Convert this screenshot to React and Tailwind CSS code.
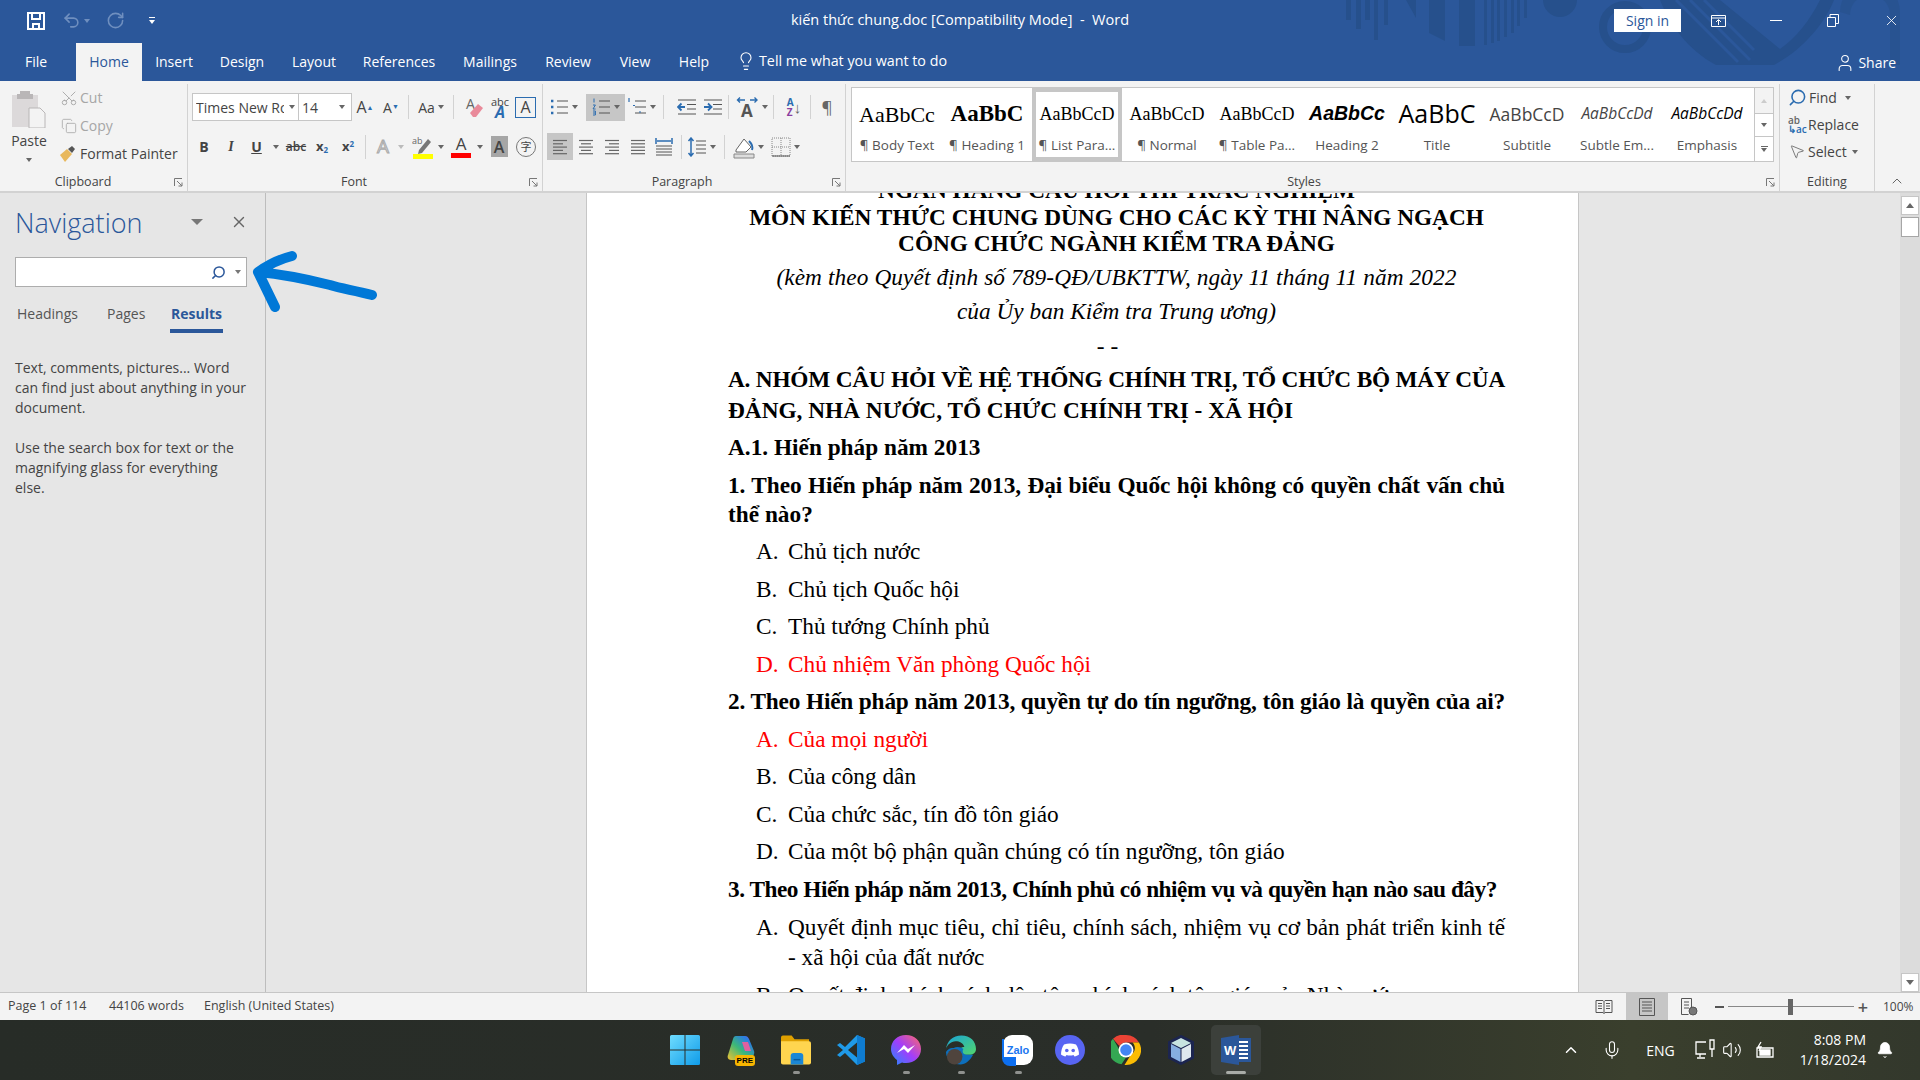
import { Search, X, Lightbulb, Scissors, Copy, Undo2, RotateCw, ChevronUp, Mic, Bell, Volume2, MousePointer2, User } from 'lucide-react';

const Caret = ({ className = 'ml-[3px]', color = 'border-t-[#666]' }) => (
  <span className={`inline-block h-0 w-0 border-x-[3px] border-t-[4px] border-x-transparent ${color} ${className}`} />
);

const Launcher = () => (
  <svg width="9" height="9" viewBox="0 0 9 9" fill="none" stroke="#777"><path d="M.5 8V.5H8M3 3l5 5M8 4.5V8H4.5" /></svg>
);

const Sep = ({ className = 'mx-[4px]' }) => <span className={`h-[24px] w-px bg-[#d2d2d2] ${className}`} />;

function Btn({ w, active, children, className = '' }) {
  return (
    <div className={`flex h-[27px] shrink-0 items-center justify-center ${w} ${active ? 'bg-[#c6c6c6]' : ''} ${className}`}>
      {children}
    </div>
  );
}

// lines used by the paragraph buttons
const Bars = ({ rows, color = '#666' }) => (
  <svg width="20" height="18" viewBox="0 0 20 18" stroke={color} strokeWidth="1.2">
    {rows.map(([a, b], i) => (
      <path key={i} d={`M${a} ${2.5 + i * 3.3}H${b}`} />
    ))}
  </svg>
);

const BulletList = ({ kind }) => (
  <svg width="20" height="20" viewBox="0 0 20 20" stroke="#555" strokeWidth="1.2">
    <path d="M8 4h11M8 10h11M8 16h11" />
    {kind === 'bullet' && <path d="M2 4h2.4M2 10h2.4M2 16h2.4" stroke="#2b6cb0" strokeWidth="2.4" />}
    {kind === 'number' && <path d="M3 1.5v4M2 8h2.4L2 12h2.6M2 14h2.4v4H2M2 16h2" stroke="#2b6cb0" strokeWidth="1" fill="none" />}
    {kind === 'multi' && <path d="M2 1v4M6 8.500h2M12 15h2" stroke="#2b6cb0" strokeWidth="1.200" />}
  </svg>
);

const Indent = ({ flip }) => (
  <svg width="20" height="20" viewBox="0 0 20 20" fill="none" stroke="#555" strokeWidth="1.200">
    <path d="M1 3h18M10 7.500h9M10 12h9M1 17h18" />
    <path d={flip ? 'M1 10h7M5 6.500l3.500 3.500L5 13.500' : 'M8 10H1M4.500 6.500L1 10l3.500 3.500'} stroke="#2b6cb0" strokeWidth="1.800" />
  </svg>
);

const sans = "font-['Open_Sans',sans-serif]";
const serif = "font-['Liberation_Serif',serif]";

const tabs = [
  ['Insert', 'w-[64px]'],
  ['Design', 'w-[72px]'],
  ['Layout', 'w-[72px]'],
  ['References', 'w-[98px]'],
  ['Mailings', 'w-[84px]'],
  ['Review', 'w-[72px]'],
  ['View', 'w-[62px]'],
  ['Help', 'w-[56px]'],
];

const styleItems = [
  ['AaBbCc', '¶ Body Text', "font-['Liberation_Serif',serif] text-[22px] text-black"],
  ['AaBbC', '¶ Heading 1', "font-['Liberation_Serif',serif] text-[23px] font-bold text-black"],
  ['AaBbCcD', '¶ List Para...', "font-['Liberation_Serif',serif] text-[18px] text-black"],
  ['AaBbCcD', '¶ Normal', "font-['Liberation_Serif',serif] text-[18px] text-black"],
  ['AaBbCcD', '¶ Table Pa...', "font-['Liberation_Serif',serif] text-[18px] text-black"],
  ['AaBbCc', 'Heading 2', "font-['Liberation_Sans',sans-serif] text-[19.500px] font-bold italic text-black"],
  ['AaBbC', 'Title', "font-['Open_Sans',sans-serif] text-[25px] text-black"],
  ['AaBbCcD', 'Subtitle', "font-['Open_Sans',sans-serif] text-[17.500px] text-[#444]"],
  ['AaBbCcDd', 'Subtle Em...', "font-['Open_Sans',sans-serif] text-[15.500px] italic text-[#444]"],
  ['AaBbCcDd', 'Emphasis', "font-['Open_Sans',sans-serif] text-[15.500px] italic text-black"],
];

const lines = [
  { t: 'NGÂN HÀNG CÂU HỎI THI TRẮC NGHIỆM', k: 'center font-bold', mt: '-mt-[16px]' },
  { t: 'MÔN KIẾN THỨC CHUNG DÙNG CHO CÁC KỲ THI NÂNG NGẠCH', k: 'center font-bold', mt: 'mt-px' },
  { t: 'CÔNG CHỨC NGÀNH KIỂM TRA ĐẢNG', k: 'center font-bold', mt: 'mt-0' },
  { t: '(kèm theo Quyết định số 789-QĐ/UBKTTW, ngày 11 tháng 11 năm 2022', k: 'center italic', mt: 'mt-[8px]', x: 'tracking-[0.1px]' },
  { t: 'của Ủy ban Kiểm tra Trung ương)', k: 'center italic', mt: 'mt-[8px]' },
  { t: '- -', k: 'center', mt: 'mt-[9px]', x: 'pr-[18px]' },
  { t: 'A. NHÓM CÂU HỎI VỀ HỆ THỐNG CHÍNH TRỊ, TỔ CHỨC BỘ MÁY CỦA', k: 'just font-bold', mt: 'mt-[7px]', x: 'tracking-[-0.25px]' },
  { t: 'ĐẢNG, NHÀ NƯỚC, TỔ CHỨC CHÍNH TRỊ - XÃ HỘI', k: 'left font-bold', mt: 'mt-[5px]' },
  { t: 'A.1. Hiến pháp năm 2013', k: 'left font-bold', mt: 'mt-[11px]' },
  { t: '1. Theo Hiến pháp năm 2013, Đại biểu Quốc hội không có quyền chất vấn chủ', k: 'just font-bold', mt: 'mt-[12px]', x: 'tracking-[-0.03px]' },
  { t: 'thể nào?', k: 'left font-bold', mt: 'mt-[3px]' },
  { m: 'A.', t: 'Chủ tịch nước', mt: 'mt-[11px]' },
  { m: 'B.', t: 'Chủ tịch Quốc hội', mt: 'mt-[12px]' },
  { m: 'C.', t: 'Thủ tướng Chính phủ', mt: 'mt-[11px]' },
  { m: 'D.', t: 'Chủ nhiệm Văn phòng Quốc hội', red: true, mt: 'mt-[12px]' },
  { t: '2. Theo Hiến pháp năm 2013, quyền tự do tín ngưỡng, tôn giáo là quyền của ai?', k: 'just font-bold', mt: 'mt-[11px]', x: 'tracking-[-0.19px]' },
  { m: 'A.', t: 'Của mọi người', red: true, mt: 'mt-[12px]' },
  { m: 'B.', t: 'Của công dân', mt: 'mt-[11px]' },
  { m: 'C.', t: 'Của chức sắc, tín đồ tôn giáo', mt: 'mt-[12px]' },
  { m: 'D.', t: 'Của một bộ phận quần chúng có tín ngưỡng, tôn giáo', mt: 'mt-[11px]' },
  { t: '3. Theo Hiến pháp năm 2013, Chính phủ có nhiệm vụ và quyền hạn nào sau đây?', k: 'left font-bold', mt: 'mt-[12px]', x: 'tracking-[-0.48px]' },
  { m: 'A.', t: 'Quyết định mục tiêu, chỉ tiêu, chính sách, nhiệm vụ cơ bản phát triển kinh tế', just: true, mt: 'mt-[12px]' },
  { m: '', t: '- xã hội của đất nước', mt: 'mt-[4px]' },
  { m: 'B.', t: 'Quyết định chính sách dân tộc, chính sách tôn giáo của Nhà nước', mt: 'mt-[12px]' },
];

function DocLine({ line }) {
  if (line.k) {
    const align = line.k.startsWith('center')
      ? 'text-center'
      : line.k.startsWith('just')
        ? 'text-justify [text-align-last:justify]'
        : 'text-left';
    const weight = line.k.split(' ')[1] || '';
    return <p className={`h-[26px] shrink-0 whitespace-nowrap leading-[26px] ${align} ${weight} ${line.mt} ${line.x || ''}`}>{line.t}</p>;
  }
  return (
    <div className={`flex h-[26px] shrink-0 pl-[28px] leading-[26px] ${line.red ? 'text-[#ff0000]' : 'text-black'} ${line.mt}`}>
      <span className="w-[32px] shrink-0">{line.m}</span>
      <span className={`flex-1 whitespace-nowrap ${line.just ? 'tracking-[-0.03px] text-justify [text-align-last:justify]' : ''}`}>{line.t}</span>
    </div>
  );
}

function GroupLabel({ label, launcher, labelClass = '' }) {
  return (
    <div className="relative flex h-[22px] items-center justify-center pt-[5px] text-[12.500px] text-[#444]">
      <span className={labelClass}>{label}</span>
      {launcher && <span className="absolute right-[4px] top-[9px]"><Launcher /></span>}
    </div>
  );
}

function Group({ w, label, launcher, labelClass = '', children }) {
  return (
    <div className={`flex h-full shrink-0 flex-col border-r border-[#d2d2d2] ${w}`}>
      <div className="flex-1">{children}</div>
      <GroupLabel label={label} launcher={launcher} labelClass={labelClass} />
    </div>
  );
}

export default function App() {
  return (
    <div className={`flex h-[1080px] w-[1920px] flex-col overflow-hidden bg-white ${sans}`}>
      {/* title bar + tabs */}
      <header className="relative h-[81px] shrink-0 bg-[#2b579a] text-white">
        <svg className="absolute left-[1300px] top-0" width="620" height="65" viewBox="0 0 620 65" fill="#26508c">
          <path d="M46 0h5v20h-5zM56 0h5v29h-5zM65 0h5v20h-5zM74 0h4v40h-4zM84 0h4v25h-4z" />
          <path d="M129 0h16v41l-16-8zM159 0h16v46h-16zM184 0h3v45h-3zM191 0h3v43h-3zM197 0h3v41h-3zM204 0h3v37h-3zM211 0h3v33h-3zM217 0h3v26h-3zM224 0h3v18h-3zM106 0h10v18z" />
          <circle cx="260" cy="0" r="17" />
          <circle cx="325" cy="27" r="22" fill="none" stroke="#26508c" strokeWidth="8" />
          <path d="M360 0c10 25 28 50 56 65h58c28-15 50-40 60-65h-14c-10 20-24 38-40 49L420 0z" />
          <path d="M390 0l60 60M404 0l50 50M376 0l62 62" stroke="#2b579a" strokeWidth="3" fill="none" />
          <path d="M540 12a30 30 0 0 1 60 0v53h-10V15a20 20 0 0 0-40 0z" opacity=".6" />
        </svg>

        <div className="relative grid h-[41px] grid-cols-[1fr_auto_1fr] items-center">
          <div className="flex items-center pl-[27px]">
            <svg width="18" height="18" viewBox="0 0 18 18" fill="none" stroke="#fff" strokeWidth="2">
              <path d="M1 1h16v16H1zM5 1v6h8V1M6 17v-5h6v5" />
            </svg>
            <Undo2 size={19} className="ml-[17px] text-[#6f8fbf]" />
            <Caret className="ml-[3px]" color="border-t-[#6f8fbf]" />
            <RotateCw size={19} className="ml-[16px] text-[#6f8fbf]" />
            <span className="ml-[24px] flex flex-col items-center gap-[2px]">
              <span className="h-px w-[6px] bg-white" />
              <Caret className="" color="border-t-white" />
            </span>
          </div>
          <div className="whitespace-pre pb-[2px] text-[14.500px]">kiến thức chung.doc [Compatibility Mode]  -  Word</div>
          <div className="flex items-center justify-end pr-[6px]">
            <div className="flex h-[23px] w-[67px] items-center justify-center bg-white text-[14px] text-[#2b579a]">Sign in</div>
            <div className="ml-[14px] flex w-[46px] justify-center">
              <svg width="15" height="12" viewBox="0 0 15 12" fill="none" stroke="#fff"><path d="M.5.500h14v11H.5zM.5 3h14M7.500 10V5M5 7l2.500-2.500L10 7" /></svg>
            </div>
            <div className="ml-[12px] flex w-[46px] justify-center"><span className="h-px w-[12px] bg-white" /></div>
            <div className="ml-[11px] flex w-[46px] justify-center">
              <svg width="12" height="13" viewBox="0 0 12 13" fill="none" stroke="#fff"><path d="M.5 3.500h8v9h-8zM3 3.500V.5h8.500v9H8.500" /></svg>
            </div>
            <div className="ml-[12px] flex w-[46px] justify-center"><X size={17} strokeWidth={1.2} /></div>
          </div>
        </div>

        <div className="relative flex h-[40px] items-end text-[14px]">
          <div className="flex h-[38px] w-[76px] items-center justify-center pb-[2px] pr-[4px]">File</div>
          <div className="flex h-[38px] w-[66px] items-center justify-center bg-[#f3f3f3] pb-[2px] text-[#2b579a]">Home</div>
          {tabs.map(([name, w]) => (
            <div key={name} className={`flex h-[38px] items-center justify-center pb-[2px] ${w}`}>{name}</div>
          ))}
          <div className="ml-[14px] flex h-[38px] items-center gap-[3px] pb-[2px]">
            <Lightbulb size={20} strokeWidth={1.300} />
            <span className="text-[14.300px]">Tell me what you want to do</span>
          </div>
          <div className="ml-auto mr-[24px] flex h-[38px] items-center gap-[3px] pt-[1px]">
            <User size={20} strokeWidth={1.300} />
            <span>Share</span>
          </div>
        </div>
      </header>

      {/* ribbon */}
      <section className="flex h-[112px] shrink-0 border-b-2 border-[#d2d2d2] bg-[#f3f3f3] pt-[3px] text-[#444]">
        <Group w="w-[188px]" label="Clipboard" launcher labelClass="pr-[21px]">
          <div className="flex">
            <div className="flex w-[58px] flex-col items-center pt-[6px]">
              <svg width="36" height="38" viewBox="0 0 36 38">
                <path d="M1 5h26v32H1z" fill="#dcd9da" />
                <path d="M9 1h10v3h3v5H6V4h3z" fill="#b9b6b7" />
                <path d="M18 18h11l5 5v15H18z" fill="#f3f3f3" stroke="#b9b6b7" />
              </svg>
              <span className="mt-[3px] text-[14px] leading-[20px]">Paste</span>
              <Caret className="mt-[7px]" color="border-t-[#666]" />
            </div>
            <div className="flex flex-col text-[14px] leading-[28px]">
              <div className="flex h-[28px] items-center text-[#a6a6a6]"><Scissors size={18} strokeWidth={1.200} className="w-[22px] -rotate-90" /><span className="ml-[0px]">Cut</span></div>
              <div className="flex h-[28px] items-center text-[#a6a6a6]"><Copy size={16} strokeWidth={1.200} className="w-[22px]" /><span>Copy</span></div>
              <div className="flex h-[28px] items-center">
                <svg width="20" height="18" viewBox="0 0 20 18" className="mr-[2px]"><path d="M2 10l7-6 5 5-7 8z" fill="#e8b85c" /><path d="M10 4l4-3 3 3-3 4z" fill="#555" /></svg>
                <span>Format Painter</span>
              </div>
            </div>
          </div>
        </Group>

        <Group w="w-[355px]" label="Font" launcher labelClass="pr-[22px]">
          <div className="flex h-[37px] items-center pl-[4px] pt-[9px]">
            <div className="flex h-[28px] w-[107px] items-center border border-[#c6c6c6] bg-white pl-[3px] text-[14px]">
              <span className="w-[88px] overflow-hidden whitespace-nowrap">Times New Roman</span>
              <Caret className="ml-[5px]" />
            </div>
            <div className="-ml-px flex h-[28px] w-[54px] items-center justify-between border border-[#c6c6c6] bg-white px-[3px] text-[14px]">
              <span>14</span><Caret className="mr-[3px]" />
            </div>
            <Btn w="w-[26px]"><span className="text-[16px]">A<sup className="text-[7px] text-[#2b6cb0]">▲</sup></span></Btn>
            <Btn w="w-[26px]"><span className="text-[14px]">A<sup className="text-[7px] text-[#2b6cb0]">▼</sup></span></Btn>
            <Sep className="mx-[4px]" />
            <Btn w="w-[36px]"><span className="text-[14px]">Aa</span><Caret /></Btn>
            <Sep className="mx-[4px]" />
            <Btn w="w-[24px]" className="ml-[5px]">
              <svg width="20" height="22" viewBox="0 0 20 22"><text x="1" y="13" fontSize="14" fill="#666">A</text><path d="M5 17l8-9 5 4-7 9H8z" fill="#e98a9a" /></svg>
            </Btn>
            <Btn w="w-[26px]">
              <span className="flex flex-col items-center leading-[10px]"><span className="text-[11px]">abc</span><span className="text-[16px] font-bold italic text-[#2b6cb0]">A</span></span>
            </Btn>
            <div className="ml-[2px] flex h-[21px] w-[21px] items-center justify-center border border-[#2b6cb0] text-[16px]">A</div>
          </div>
          <div className="mt-[8px] flex h-[27px] items-center pl-[4px] pt-[8px]">
            <Btn w="w-[24px]"><span className="text-[14px] font-bold">B</span></Btn>
            <Btn w="w-[24px]" className="ml-[3px]"><span className="font-['Liberation_Serif',serif] text-[14px] font-bold italic">I</span></Btn>
            <Btn w="w-[23px]" className="ml-[2px]"><span className="text-[14px] font-bold underline">U</span></Btn>
            <Btn w="w-[13px]" className="ml-px"><Caret className="" /></Btn>
            <Btn w="w-[24px]" className="ml-[2px]"><span className="text-[12px] font-semibold line-through">abc</span></Btn>
            <Btn w="w-[24px]" className="ml-[2px]"><span className="text-[13px] font-bold">x<sub className="text-[8px] text-[#2b6cb0]">2</sub></span></Btn>
            <Btn w="w-[24px]" className="ml-[2px]"><span className="text-[13px] font-bold">x<sup className="text-[8px] text-[#2b6cb0]">2</sup></span></Btn>
            <Sep className="ml-[5px] mr-[6px]" />
            <Btn w="w-[22px]"><span className="text-[19px] text-[#dcdcdc] [-webkit-text-stroke:1px_#aaa]">A</span></Btn>
            <Btn w="w-[11px]" className="ml-px"><Caret className="" color="border-t-[#bbb]" /></Btn>
            <Btn w="w-[22px]" className="ml-[6px]">
              <svg width="22" height="24" viewBox="0 0 22 24"><text x="0" y="9" fontSize="9" fill="#666">ab</text><path d="M7 15l9-11 3 3-9 11-4 1z" fill="#777" /><path d="M1 19h20v5H1z" fill="#ffff00" /></svg>
            </Btn>
            <Btn w="w-[10px]" className="ml-[2px]"><Caret className="" /></Btn>
            <Btn w="w-[22px]" className="ml-[4px]">
              <span className="flex flex-col items-center"><span className="text-[17px] leading-[18px] text-[#444]">A</span><span className="h-[5px] w-[20px] bg-[#ff0000]" /></span>
            </Btn>
            <Btn w="w-[10px]" className="ml-[3px]"><Caret className="" /></Btn>
            <Btn w="w-[22px]" className="ml-[3px]"><span className="flex h-[21px] w-[17px] items-center justify-center bg-[#a6a6a6] text-[16px] font-semibold leading-none">A</span></Btn>
            <Btn w="w-[22px]" className="ml-[5px]"><span className="flex h-[20px] w-[20px] items-center justify-center rounded-full border border-[#777] font-['Noto_Sans_CJK_SC',sans-serif] text-[11px]">字</span></Btn>
          </div>
        </Group>

        <Group w="w-[303px]" label="Paragraph" launcher labelClass="pr-[24px]">
          <div className="flex h-[37px] items-center pl-[4px] pt-[9px]">
            <Btn w="w-[33px]"><BulletList kind="bullet" /><Caret /></Btn>
            <Btn w="w-[39px]" active className="ml-[6px]"><BulletList kind="number" /><Caret /></Btn>
            <Btn w="w-[36px]" className="-ml-[2px]"><BulletList kind="multi" /><Caret /></Btn>
            <Sep className="ml-[4px] mr-[8px]" />
            <Btn w="w-[23px]" className="ml-[3px]"><Indent /></Btn>
            <Btn w="w-[23px]" className="ml-[3px]"><Indent flip /></Btn>
            <Sep className="mx-[4px]" />
            <Btn w="w-[34px]" className="ml-[2px]">
              <svg width="22" height="22" viewBox="0 0 22 22" fill="none" className="mr-[1px]">
                <path d="M2 4h7M4 1.500L1.500 4 4 6.500M14 4h7M18.500 1.500L21 4l-2.500 2.500" stroke="#2b6cb0" strokeWidth="1.400" />
                <text x="5" y="21" fontSize="17" fontWeight="700" fill="#555" fontFamily="Open Sans">A</text>
              </svg>
              <Caret />
            </Btn>
            <Sep className="ml-[4px] mr-[8px]" />
            <Btn w="w-[24px]">
              <span className="flex flex-col text-[10px] font-bold leading-[10px]"><span className="text-[#2b6cb0]">A</span><span className="text-[#8a3fa0]">Z</span></span>
              <span className="text-[15px] text-[#666]">↓</span>
            </Btn>
            <Sep className="mx-[4px]" />
            <Btn w="w-[24px]"><span className="text-[17px] text-[#666]">¶</span></Btn>
          </div>
          <div className="mt-[8px] flex h-[27px] items-center pl-[4px] pt-[8px]">
            <Btn w="w-[26px]" active><Bars rows={[[3, 17], [3, 13], [3, 17], [3, 13], [3, 17]]} /></Btn>
            <Btn w="w-[26px]"><Bars rows={[[3, 17], [5, 15], [3, 17], [5, 15], [3, 17]]} /></Btn>
            <Btn w="w-[26px]"><Bars rows={[[3, 17], [7, 17], [3, 17], [7, 17], [3, 17]]} /></Btn>
            <Btn w="w-[26px]"><Bars rows={[[3, 17], [3, 17], [3, 17], [3, 17], [3, 17]]} /></Btn>
            <Btn w="w-[26px]">
              <svg width="20" height="20" viewBox="0 0 20 20" stroke="#555" fill="none"><path d="M2 9h16M2 12h16M2 15h16M2 18h16" /><path d="M2 1v6M18 1v6M3 4h14" stroke="#2b6cb0" strokeWidth="1.500" /></svg>
            </Btn>
            <Sep className="mx-[4px]" />
            <Btn w="w-[30px]">
              <svg width="20" height="20" viewBox="0 0 20 20" fill="none" stroke="#555"><path d="M9 4h10M9 8h10M9 12h10M9 16h10" /><path d="M4 1v18M1.500 4L4 1l2.500 3M1.500 16L4 19l2.500-3" stroke="#2b6cb0" strokeWidth="1.500" /></svg>
              <Caret />
            </Btn>
            <Sep className="ml-[8px] mr-[4px]" />
            <Btn w="w-[38px]">
              <svg width="22" height="24" viewBox="0 0 22 24" fill="none"><path d="M3 15l8-11 7 8-5 5H3z" fill="#fff" stroke="#666" /><path d="M16 6c3 3 4 6 3 9" stroke="#2b6cb0" strokeWidth="2" /><path d="M1 19h20v4H1z" fill="#ddd" stroke="#888" /></svg>
              <Caret />
            </Btn>
            <Btn w="w-[32px]" className="ml-[2px]">
              <svg width="20" height="20" viewBox="0 0 20 20" fill="none" stroke="#888" strokeDasharray="1 1"><path d="M1 1h18v18H1zM10 1v18M1 10h18" /><path d="M1 19h18" stroke="#555" strokeDasharray="none" /></svg>
              <Caret />
            </Btn>
          </div>
        </Group>

        <div className="flex h-full w-[934px] shrink-0 flex-col border-r border-[#d2d2d2]">
          <div className="flex-1 pl-[5px] pt-[3px]">
            <div className="flex h-[75px] w-[923px] border border-[#c6c6c6] bg-white">
              <div className="flex flex-1">
                {styleItems.map(([sample, name, cls], i) => (
                  <div
                    key={name}
                    className={`flex h-[73px] w-[90px] shrink-0 flex-col items-center overflow-hidden whitespace-nowrap ${i === 2 ? 'border-[4px] border-[#c6c6c6]' : 'border-[4px] border-transparent'}`}
                  >
                    <div className={`flex h-[44px] items-center ${cls}`}>{sample}</div>
                    <div className="text-[13.500px] leading-[18px] text-[#555]">{name}</div>
                  </div>
                ))}
              </div>
              <div className="flex w-[19px] shrink-0 flex-col border-l border-[#c6c6c6] text-[#888]">
                <div className="flex h-[25px] items-center justify-center bg-[#f3f3f3]"><Caret className="rotate-180" color="border-t-[#ccc]" /></div>
                <div className="flex h-[24px] items-center justify-center border-y border-[#c6c6c6]"><Caret className="" /></div>
                <div className="flex h-[24px] flex-col items-center justify-center gap-[1px]"><span className="h-px w-[7px] bg-[#666]" /><Caret className="" /></div>
              </div>
            </div>
          </div>
          <GroupLabel label="Styles" launcher labelClass="pr-[17px]" />
        </div>

        <div className="flex h-full w-[95px] shrink-0 flex-col border-r border-[#d2d2d2]">
          <div className="flex flex-1 flex-col pl-[8px] text-[14px] leading-[27px]">
            <div className="flex h-[27px] items-center gap-[2px]">
              <Search size={19} strokeWidth={2} className="-scale-x-100 text-[#2b6cb0]" />Find<Caret className="ml-[6px]" />
            </div>
            <div className="flex h-[27px] items-center gap-[2px]">
              <span className="flex w-[18px] flex-col text-[10px] font-semibold leading-[9px]"><span className="text-[#666]">ab</span><span className="text-[#2b6cb0]">↳ac</span></span>Replace
            </div>
            <div className="flex h-[27px] items-center gap-[2px]">
              <MousePointer2 size={17} strokeWidth={1.200} className="w-[18px] text-[#666]" />Select<Caret />
            </div>
          </div>
          <GroupLabel label="Editing" />
        </div>
        <div className="flex flex-1 items-end justify-center pb-[2px] pr-[1px]">
          <ChevronUp size={16} strokeWidth={1.500} className="text-[#666]" />
        </div>
      </section>

      {/* work area */}
      <main className="flex min-h-0 flex-1 bg-[#e6e6e6]">
        <aside className="w-[266px] shrink-0 border-r border-[#bdbdbd] pl-[15px]">
          <div className="flex h-[61px] items-center pb-[3px]">
            <span className="text-[27px] font-light leading-none text-[#2b579a]">Navigation</span>
            <Caret className="ml-[48px] border-x-[6px] border-t-[6px]" color="border-t-[#777]" />
            <X size={18} strokeWidth={1.800} className="ml-[27px] text-[#666]" />
          </div>
          <div className="mt-[3px] flex h-[30px] w-[232px] items-center justify-end border border-[#adadad] bg-white pr-[5px]">
            <Search size={15} strokeWidth={2.400} className="-scale-x-100 text-[#2b579a]" />
            <Caret className="ml-[9px]" color="border-t-[#777]" />
          </div>
          <div className="mt-[13px] flex h-[34px] text-[14px] leading-[28px] text-[#555]">
            <span className="ml-[2px] w-[90px]">Headings</span>
            <span className="w-[64px]">Pages</span>
            <span className="relative h-[29px] font-bold text-[#2b579a]">
              Results
              <span className="absolute -left-px -right-px bottom-[-4px] h-[4px] bg-[#2b579a]" />
            </span>
          </div>
          <div className="mt-[24px] whitespace-nowrap text-[14px] leading-[20px] text-[#444]">
            <p>Text, comments, pictures... Word<br />can find just about anything in your<br />document.</p>
            <p className="mt-[20px]">Use the search box for text or the<br />magnifying glass for everything<br />else.</p>
          </div>
        </aside>

        <div className="w-[320px] shrink-0" />

        <article className={`flex w-[993px] shrink-0 flex-col overflow-hidden border-x border-[#c6c6c6] bg-white pl-[141px] pr-[73px] text-[23.300px] text-black ${serif}`}>
          {lines.map((line) => (
            <DocLine key={line.t} line={line} />
          ))}
        </article>

        <div className="flex-1" />

        <div className="flex w-[20px] shrink-0 flex-col items-center bg-[#dcdcdc] pt-[3px]">
          <div className="flex h-[19px] w-[18px] items-center justify-center border border-[#c6c6c6] bg-white"><Caret className="rotate-180 border-x-[4px] border-t-[5px]" /></div>
          <div className="mt-[2px] h-[20px] w-[18px] border border-[#a6a6a6] bg-white" />
          <div className="flex-1" />
          <div className="flex h-[19px] w-[18px] items-center justify-center border border-[#c6c6c6] bg-white"><Caret className="border-x-[4px] border-t-[5px]" /></div>
        </div>
      </main>

      {/* status bar */}
      <footer className="flex h-[28px] shrink-0 items-center border-t border-[#c6c6c6] bg-[#f3f3f3] text-[12.500px] text-[#444]">
        <span className="ml-[8px] w-[101px]">Page 1 of 114</span>
        <span className="w-[95px]">44106 words</span>
        <span>English (United States)</span>
        <div className="ml-auto flex h-full items-center">
          <svg width="18" height="16" viewBox="0 0 18 16" fill="none" stroke="#555"><path d="M1 1.500h7l1 1 1-1h7v12h-7l-1 1-1-1H1zM9 2.500v12M3 4.500h4M3 7h4M3 9.500h4M11 4.500h4M11 7h4M11 9.500h4" /></svg>
          <div className="ml-[13px] flex h-full w-[42px] items-center justify-center bg-[#c6c6c6]">
            <svg width="16" height="18" viewBox="0 0 16 18" fill="none" stroke="#555"><path d="M.5.500h15v17H.5zM3 4h10M3 7h10M3 10h10M3 13h10" /></svg>
          </div>
          <svg width="18" height="18" viewBox="0 0 18 18" fill="none" stroke="#555" className="ml-[12px]"><path d="M1.500.500h10v12M1.500.500v16h7M4 4h5M4 7h5M4 10h5" /><circle cx="13" cy="13" r="4" fill="#777" /></svg>
          <span className="ml-[17px] h-[2px] w-[9px] bg-[#555]" />
          <div className="relative ml-[4px] flex h-[16px] w-[126px] items-center">
            <span className="h-px w-full bg-[#888]" />
            <span className="absolute left-[60px] h-[16px] w-[5px] bg-[#666]" />
          </div>
          <span className="ml-[4px] flex h-[10px] w-[10px] items-center justify-center text-[18px] font-semibold leading-none text-[#555]">+</span>
          <span className="ml-[15px] mr-[2px] w-[35px] whitespace-nowrap text-[12px]">100%</span>
        </div>
      </footer>

      {/* taskbar */}
      <nav className="relative flex h-[60px] shrink-0 items-center bg-[linear-gradient(90deg,#272c27_0%,#2a2e29_60%,#3a3f2d_85%,#33382c_100%)] text-white">
        <div className="ml-[670px] flex items-center">
          <Win />
          <Task ml="ml-[25px]"><CopilotIcon /></Task>
          <Task ml="ml-[26px]" dot><FolderIcon /></Task>
          <Task ml="ml-[25px]"><VsIcon /></Task>
          <Task ml="ml-[25px]" dot><MessengerIcon /></Task>
          <Task ml="ml-[25px]" dot><EdgeIcon /></Task>
          <Task ml="ml-[27px]" dot><ZaloIcon /></Task>
          <Task ml="ml-[22px]"><DiscordIcon /></Task>
          <Task ml="ml-[26px]"><ChromeIcon /></Task>
          <Task ml="ml-[25px]"><BoxIcon /></Task>
          <div className="relative ml-[15px] flex h-[50px] w-[50px] items-center justify-center rounded-[5px] bg-[#3c403b]">
            <WordIcon />
            <span className="absolute bottom-[1px] h-[3px] w-[20px] rounded-full bg-[#a9aca8]" />
          </div>
        </div>
        <div className="ml-auto flex items-center">
          <ChevronUp size={18} strokeWidth={2} />
          <Mic size={20} strokeWidth={1.300} className="ml-[22px]" />
          <span className="ml-[24px] text-[14px]">ENG</span>
          <svg width="20" height="22" viewBox="0 0 20 22" fill="none" stroke="#fff" strokeWidth="1.300" className="ml-[20px]"><path d="M11 3H1v12h10M5 15v3M2 19h8M15 1h4v9h-4zM17 10v8" /></svg>
          <Volume2 size={20} strokeWidth={1.300} className="ml-[7px]" />
          <svg width="20" height="20" viewBox="0 0 20 20" fill="none" stroke="#fff" strokeWidth="1.300" className="ml-[13px]"><path d="M4 8h14v9H2V8zM6 2L3 7h3l-2 4" /><path d="M5 10h10v5H5z" fill="#fff" /></svg>
          <div className="ml-[25px] flex flex-col items-end text-[14px] leading-[20px]">
            <span>8:08 PM</span>
            <span>1/18/2024</span>
          </div>
          <Bell size={18} fill="#fff" strokeWidth={1} className="ml-[10px] mr-[26px]" />
        </div>
      </nav>

      <svg className="absolute left-[250px] top-[245px]" width="130" height="70" viewBox="250 245 130 70" fill="none" stroke="#0078d7" strokeWidth="10" strokeLinecap="round" strokeLinejoin="round">
        <path d="M372 295c-18-5-30-6-42-10-24-6-50-11-72-13M292 256c-12 3-24 9-34 16l17 35" />
      </svg>
    </div>
  );
}

function Task({ ml, dot, children }) {
  return (
    <div className={`relative flex h-[30px] w-[30px] items-center justify-center ${ml}`}>
      {children}
      {dot && <span className="absolute bottom-[-9px] h-[3px] w-[7px] rounded-full bg-[#8f918e]" />}
    </div>
  );
}

const Win = () => (
  <svg width="30" height="30" viewBox="0 0 30 30">
    <defs><linearGradient id="w" x1="0" y1="0" x2="1" y2="1"><stop stopColor="#6fdcff" /><stop offset="1" stopColor="#0f9be8" /></linearGradient></defs>
    <path d="M0 1.500A1.500 1.500 0 0 1 1.500 0h13v14.500H0zM15.500 0H28.500A1.500 1.500 0 0 1 30 1.500v13H15.500zM0 15.500h14.500V30h-13A1.500 1.500 0 0 1 0 28.500zM15.500 15.500H30v13a1.500 1.500 0 0 1-1.500 1.500H15.500z" fill="url(#w)" />
  </svg>
);

const CopilotIcon = () => (
  <div className="relative h-[30px] w-[30px]">
    <svg width="30" height="26" viewBox="0 0 30 26">
      <defs><linearGradient id="c" x1="0" y1="1" x2="1" y2="0"><stop stopColor="#f2c230" /><stop offset=".45" stopColor="#3cb878" /><stop offset=".8" stopColor="#2a7be4" /><stop offset="1" stopColor="#b05be0" /></linearGradient></defs>
      <path d="M11 1h9c2 0 3 1 4 3l5 12c1 3-1 6-4 6h-8l-4 3H6c-3 0-4-3-3-5L8 4c.5-2 1.500-3 3-3z" fill="url(#c)" />
      <path d="M17 7h6l3 9h-6z" fill="#e060a0" />
    </svg>
    <span className="absolute -bottom-[1px] right-0 rounded-[3px] bg-[#f7b500] px-[2px] font-['Liberation_Sans',sans-serif] text-[8px] font-bold leading-[11px] text-black">PRE</span>
  </div>
);

const FolderIcon = () => (
  <svg width="31" height="30" viewBox="0 0 31 30">
    <path d="M0 2a2 2 0 0 1 2-2h9l3 4h15v24H0z" fill="#dfa000" />
    <path d="M0 6h29a2 2 0 0 1 2 2v20a2 2 0 0 1-2 2H2a2 2 0 0 1-2-2z" fill="#ffd54f" />
    <path d="M10 21a3 3 0 0 1 3-3h7a3 3 0 0 1 3 3v9H10z" fill="#1b87d6" />
    <path d="M13 25h7" stroke="#0b5a9c" strokeWidth="1.500" />
  </svg>
);

const VsIcon = () => (
  <svg width="30" height="30" viewBox="0 0 30 30">
    <path d="M21 0l8 3.500v23L21 30 9 18l-5 4-3-2 6-5-6-5 3-2 5 4z" fill="#1f9ae8" />
    <path d="M21 7.500L12 15l9 7.500z" fill="#2a2e29" />
    <path d="M21 0l8 3.500v23L21 30z" fill="#0f7cd0" />
  </svg>
);

const MessengerIcon = () => (
  <svg width="30" height="30" viewBox="0 0 30 30">
    <defs><linearGradient id="m" x1="0" y1="1" x2="1" y2="0"><stop stopColor="#1f8bff" /><stop offset=".5" stopColor="#a23dfb" /><stop offset="1" stopColor="#ff6a68" /></linearGradient></defs>
    <path d="M15 0c8.500 0 15 6 15 14s-6.500 14-15 14c-1.500 0-3-.2-4-.6L6 30v-5C2.500 22.500 0 18.500 0 14 0 6 6.500 0 15 0z" fill="url(#m)" />
    <path d="M6 18l7-8 4 4 7-4-7 8-4-4z" fill="#fff" />
  </svg>
);

const EdgeIcon = () => (
  <svg width="31" height="30" viewBox="0 0 31 30">
    <defs><linearGradient id="e" x1="0" y1="0" x2="1" y2="1"><stop stopColor="#19a3d8" /><stop offset="1" stopColor="#52d66b" /></linearGradient></defs>
    <path d="M16 0c9 0 15 6 15 14 0 4-3 6-7 6h-9c-1 0-2-1-2-3 0-3 3-5 6-5-1-4-5-6-9-6-5 0-9 4-10 8C1 6 7 0 16 0z" fill="url(#e)" />
    <path d="M8 13c3-2 8-1 10 1-2 3 0 6 4 6h6c-3 6-8 10-13 10-8 0-15-5-15-13 3-4 5-4 8-4z" fill="#0d6fbc" />
    <circle cx="9" cy="22" r="8" fill="#4f443d" />
  </svg>
);

const ZaloIcon = () => (
  <div className="relative flex h-[30px] w-[30px] items-center justify-center rounded-[9px] bg-white">
    <span className="absolute -bottom-px -left-px h-[9px] w-[14px] rounded-bl-[8px] bg-[#0d6ff0]" />
    <span className="absolute -left-px top-[4px] h-[20px] w-[2px] bg-[#0d6ff0]" />
    <span className="relative font-['Liberation_Sans',sans-serif] text-[11px] font-bold leading-none text-[#1a76f0]">Zalo</span>
  </div>
);

const DiscordIcon = () => (
  <svg width="30" height="30" viewBox="0 0 30 30">
    <circle cx="15" cy="15" r="15" fill="#5865f2" />
    <path d="M9 9.500c4-1.500 8-1.500 12 0 2 3 3 6.500 3 10-1.500 1-3 1.800-4.500 2l-1-1.500c-2.300.7-4.700.7-7 0l-1 1.500c-1.500-.2-3-1-4.500-2 0-3.500 1-7 3-10z" fill="#fff" />
    <circle cx="11.800" cy="15.500" r="1.800" fill="#5865f2" />
    <circle cx="18.200" cy="15.500" r="1.800" fill="#5865f2" />
  </svg>
);

const ChromeIcon = () => (
  <svg width="30" height="30" viewBox="0 0 30 30">
    <path d="M15 0a15 15 0 0 1 13 7.500H15A7.500 7.500 0 0 0 8.500 11.200L2 3.800A15 15 0 0 1 15 0z" fill="#ea4335" />
    <path d="M2 3.800l6.500 11.200A7.500 7.500 0 0 0 15 22.500L10.500 29.300A15 15 0 0 1 2 3.800z" fill="#34a853" />
    <path d="M28 7.500A15 15 0 0 1 15 30h-1.500l6.500-10.500A7.500 7.500 0 0 0 21.500 7.500z" fill="#fbbc04" />
    <circle cx="15" cy="15" r="7.500" fill="#fff" />
    <circle cx="15" cy="15" r="5.800" fill="#4285f4" />
  </svg>
);

const BoxIcon = () => (
  <svg width="30" height="30" viewBox="0 0 30 30">
    <path d="M15 1l12 6v16l-12 6-12-6V7z" fill="#1c2550" stroke="#1c2550" strokeWidth="2" />
    <path d="M15 3l10 5-10 5L5 8z" fill="#c7e3e0" />
    <path d="M5 9l9.500 5v13L5 22z" fill="#86aee0" />
    <path d="M25 9l-9.500 5v13L25 22z" fill="#dfe8ee" />
  </svg>
);

const WordIcon = () => (
  <svg width="30" height="30" viewBox="0 0 30 30">
    <path d="M17 3h13v24H17z" fill="#2b579a" />
    <path d="M18 7h9M18 11h9M18 15h9M18 19h9M18 23h9" stroke="#fff" strokeWidth="2" />
    <path d="M0 3l18-3v30L0 27z" fill="#2b579a" />
    <text x="3" y="20" fontSize="13" fontWeight="700" fill="#fff" fontFamily="Liberation Sans">W</text>
  </svg>
);
